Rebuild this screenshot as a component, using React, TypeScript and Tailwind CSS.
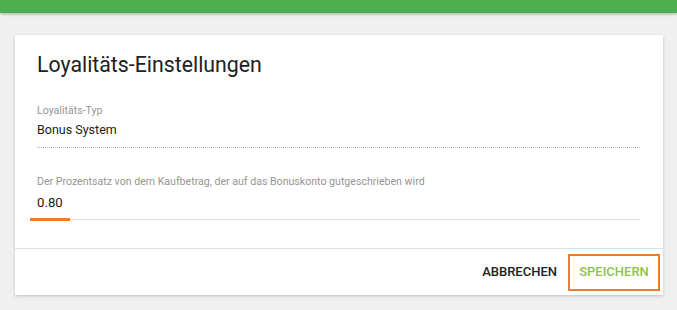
export default function App() {
  return (
    <div className="h-[310px] w-[677px] overflow-hidden bg-[#f0f0f0] font-['Roboto',sans-serif] text-[#212121]">
      <div className="h-[13px] bg-[#4caf50] shadow-[0_1px_3px_rgba(0,0,0,0.3)]" />

      <div className="ml-[15px] mt-[22px] w-[648px] bg-white shadow-[0_1px_3px_rgba(0,0,0,0.2)]">
        <div className="px-[22px] pt-[15px]">
          <h2 className="text-[21.3px] leading-[30px] font-normal">Loyalitäts-Einstellungen</h2>

          <div className="mt-[24px]">
            <label className="block text-[10.6px] leading-[14px] text-[#959595]">Loyalitäts-Typ</label>
            <div className="mt-[3px] text-[12.5px] leading-[18px]">Bonus System</div>
            <div className="mt-[8px] mr-[1px] border-b border-dotted border-[#b0b0b0]" />
          </div>

          <div className="mt-[27px]">
            <label className="block text-[10.6px] leading-[14px] text-[#959595]">
              Der Prozentsatz von dem Kaufbetrag, der auf das Bonuskonto gutgeschrieben wird
            </label>
            <div className="mt-[5px] text-[13.2px] leading-[18px]">0.80</div>
          </div>
        </div>

        <div className="relative ml-[15px] mr-[23px] mt-[7px] h-[1px] bg-[#e0e0e0]">
          <div className="absolute left-0 top-[-1px] h-[3px] w-[40px] bg-[#ee7d30]" />
        </div>

        <div className="mt-[28px] flex h-[47px] items-center justify-end gap-[5px] border-t border-[#e0e0e0] pr-[3px]">
          <button className="px-[6px] py-[8px] text-[13px] font-medium uppercase text-[#212121]">
            Abbrechen
          </button>
          <button className="flex h-[37px] w-[92px] items-center justify-center border-2 border-[#ee7d30] text-[13px] font-medium uppercase text-[#8bc34a]">
            Speichern
          </button>
        </div>
      </div>
    </div>
  );
}
